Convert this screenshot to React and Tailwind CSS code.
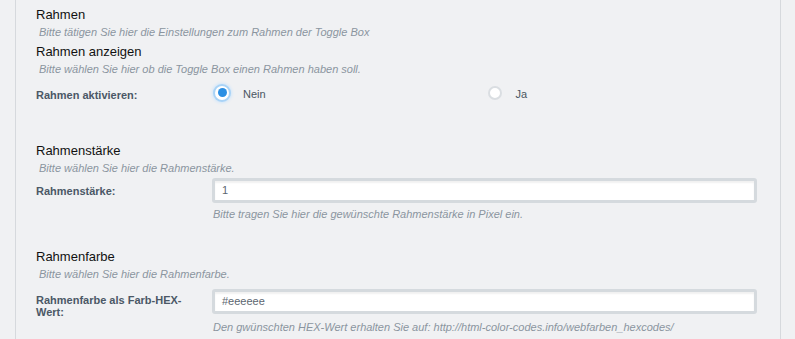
import React from 'react'

const font = { fontFamily: '"Liberation Sans", Arial, sans-serif' }

const SectionTitle = ({ title, hint }) => (
  <div>
    <div className="text-[13px] leading-4 text-[#111]">{title}</div>
    <div className="mt-[2px] pl-[3px] text-[11px] italic leading-[14px] text-[#8b959f]">{hint}</div>
  </div>
)

const Radio = ({ checked, label }) => (
  <label className="flex items-center">
    <span
      className={
        checked
          ? 'ml-[3px] flex h-[14px] w-[14px] items-center justify-center rounded-full bg-white shadow-[0_0_0_2px_#a9d3f6,0_0_3px_3px_#cfe6fb]'
          : 'ml-[3px] flex h-[14px] w-[14px] items-center justify-center rounded-full border-2 border-[#dadee2] bg-white'
      }
    >
      {checked && <span className="h-[9px] w-[9px] rounded-full bg-[#2b8fe3]" />}
    </span>
    <span className="ml-[14px] pt-[2px] text-[11px] text-[#4a5561]">{label}</span>
  </label>
)

const TextField = ({ value }) => (
  <div className="h-[25px] w-[545px] rounded-[3px] border-[3px] border-[#d5dade] bg-white px-[7px] text-[11px] leading-[19px] text-[#5c6670] shadow-[inset_0_2px_2px_rgba(0,0,0,0.06)]">
    {value}
  </div>
)

const App = () => {
  return (
    <div className="h-[339px] w-[795px] overflow-hidden bg-[#f0f1f3]" style={font}>
      <div className="ml-[15px] h-full w-[766px] border-x border-[#d6d9dd] pl-[20px]">
        <div className="pt-[7px]">
          <SectionTitle title="Rahmen" hint="Bitte tätigen Sie hier die Einstellungen zum Rahmen der Toggle Box" />
        </div>

        <div className="mt-[5px]">
          <SectionTitle title="Rahmen anzeigen" hint="Bitte wählen Sie hier ob die Toggle Box einen Rahmen haben soll." />
        </div>

        <div className="mt-[6px] flex items-center">
          <div className="w-[176px] pt-[5px] text-[11px] font-bold text-[#4b5866]">Rahmen aktivieren:</div>
          <div className="grid w-[545px] grid-cols-2">
            <Radio checked label="Nein" />
            <Radio label="Ja" />
          </div>
        </div>

        <div className="mt-[39px]">
          <SectionTitle title="Rahmenstärke" hint="Bitte wählen Sie hier die Rahmenstärke." />
        </div>

        <div className="mt-[3px] flex">
          <div className="w-[176px] pt-[7px] text-[11px] font-bold leading-[13px] text-[#4b5866]">Rahmenstärke:</div>
          <div>
            <TextField value="1" />
            <div className="mt-[4px] pl-[1px] text-[11px] italic leading-[14px] text-[#8b959f]">
              Bitte tragen Sie hier die gewünschte Rahmenstärke in Pixel ein.
            </div>
          </div>
        </div>

        <div className="mt-[28px]">
          <SectionTitle title="Rahmenfarbe" hint="Bitte wählen Sie hier die Rahmenfarbe." />
        </div>

        <div className="mt-[8px] flex">
          <div className="w-[176px] pr-[16px] pt-[5px] text-[11px] font-bold leading-[12px] text-[#4b5866]">
            Rahmenfarbe als Farb-HEX-Wert:
          </div>
          <div>
            <TextField value="#eeeeee" />
            <div className="mt-[6px] pl-[1px] text-[11px] italic leading-[14px] text-[#8b959f]">
              Den gwünschten HEX-Wert erhalten Sie auf: http://html-color-codes.info/webfarben_hexcodes/
            </div>
          </div>
        </div>
      </div>
    </div>
  )
}

export default App
